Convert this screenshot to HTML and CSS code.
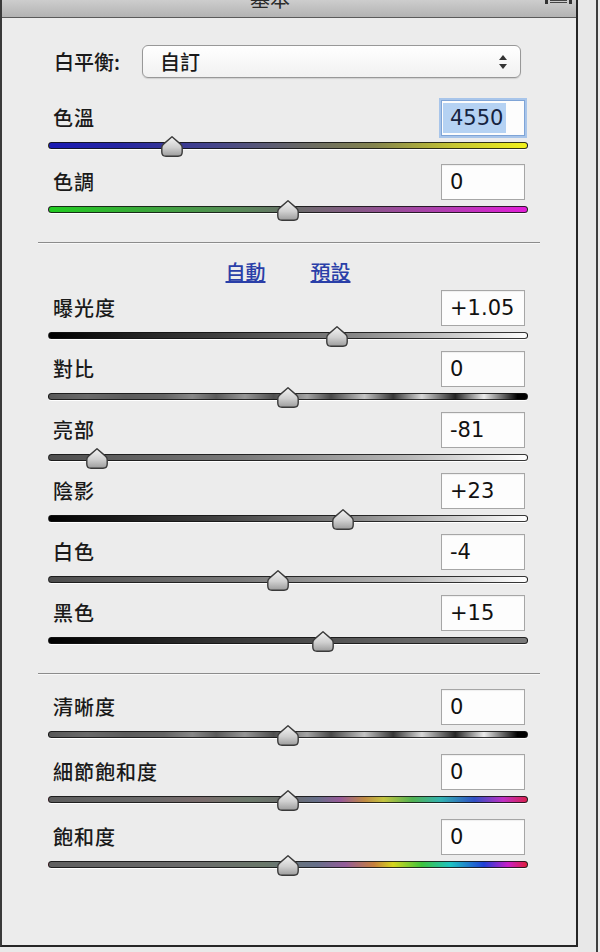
FILE: index.html
```html
<!DOCTYPE html>
<html lang="zh-Hant">
<head>
<meta charset="utf-8">
<title>基本</title>
<link rel="stylesheet" href="styles.css">
</head>
<body>
<div class="frame">
  <div class="panel">
    <div class="header">
      <span class="title">基本</span>
      <svg class="menu-icon" width="27" height="4" viewBox="0 0 27 4">
        <rect x="0" y="0" width="3" height="4" fill="#333"/>
        <rect x="5" y="0" width="17" height="1" fill="#444"/>
        <rect x="5" y="2" width="17" height="1" fill="#444"/>
        <rect x="24" y="0" width="3" height="4" fill="#333"/>
      </svg>
    </div>
    <div class="content">
      <div class="wb-row">
        <span class="label wb-label">白平衡:</span>
        <div class="select">
          <span>自訂</span>
          <svg class="updown" width="8" height="14" viewBox="0 0 8 14">
            <polygon points="4,0 8,5 0,5" fill="#333"/>
            <polygon points="0,9 8,9 4,14" fill="#333"/>
          </svg>
        </div>
      </div>

      <div class="group g1">
        <div class="ctrl">
          <div class="ctrl-head"><span class="label">色溫</span><div class="value focus"><span class="sel">4550</span></div></div>
          <div class="slider"><div class="track t-temp"></div><svg class="thumb" style="left:25.9%" viewBox="0 0 22 21"><use href="#thumb"/></svg></div>
        </div>
        <div class="ctrl">
          <div class="ctrl-head"><span class="label">色調</span><div class="value">0</div></div>
          <div class="slider"><div class="track t-tint"></div><svg class="thumb" style="left:50.1%" viewBox="0 0 22 21"><use href="#thumb"/></svg></div>
        </div>
      </div>

      <div class="divider"></div>

      <div class="links"><a href="#">自動</a><a href="#">預設</a></div>

      <div class="group g2">
        <div class="ctrl">
          <div class="ctrl-head"><span class="label">曝光度</span><div class="value">+1.05</div></div>
          <div class="slider"><div class="track t-bw"></div><svg class="thumb" style="left:60.3%" viewBox="0 0 22 21"><use href="#thumb"/></svg></div>
        </div>
        <div class="ctrl">
          <div class="ctrl-head"><span class="label">對比</span><div class="value">0</div></div>
          <div class="slider"><div class="track t-contrast"></div><svg class="thumb" style="left:50.1%" viewBox="0 0 22 21"><use href="#thumb"/></svg></div>
        </div>
        <div class="ctrl">
          <div class="ctrl-head"><span class="label">亮部</span><div class="value">-81</div></div>
          <div class="slider"><div class="track t-gw"></div><svg class="thumb" style="left:10.3%" viewBox="0 0 22 21"><use href="#thumb"/></svg></div>
        </div>
        <div class="ctrl">
          <div class="ctrl-head"><span class="label">陰影</span><div class="value">+23</div></div>
          <div class="slider"><div class="track t-bw"></div><svg class="thumb" style="left:61.5%" viewBox="0 0 22 21"><use href="#thumb"/></svg></div>
        </div>
        <div class="ctrl">
          <div class="ctrl-head"><span class="label">白色</span><div class="value">-4</div></div>
          <div class="slider"><div class="track t-gw"></div><svg class="thumb" style="left:47.9%" viewBox="0 0 22 21"><use href="#thumb"/></svg></div>
        </div>
        <div class="ctrl">
          <div class="ctrl-head"><span class="label">黑色</span><div class="value">+15</div></div>
          <div class="slider"><div class="track t-bg"></div><svg class="thumb" style="left:57.3%" viewBox="0 0 22 21"><use href="#thumb"/></svg></div>
        </div>
      </div>

      <div class="divider"></div>

      <div class="group g3">
        <div class="ctrl">
          <div class="ctrl-head"><span class="label">清晰度</span><div class="value">0</div></div>
          <div class="slider"><div class="track t-contrast"></div><svg class="thumb" style="left:50.1%" viewBox="0 0 22 21"><use href="#thumb"/></svg></div>
        </div>
        <div class="ctrl">
          <div class="ctrl-head"><span class="label">細節飽和度</span><div class="value">0</div></div>
          <div class="slider"><div class="track t-vib"></div><svg class="thumb" style="left:50.1%" viewBox="0 0 22 21"><use href="#thumb"/></svg></div>
        </div>
        <div class="ctrl">
          <div class="ctrl-head"><span class="label">飽和度</span><div class="value">0</div></div>
          <div class="slider"><div class="track t-sat"></div><svg class="thumb" style="left:50.1%" viewBox="0 0 22 21"><use href="#thumb"/></svg></div>
        </div>
      </div>
    </div>
  </div>
  <div class="side"></div>
</div>

<svg class="defs" width="0" height="0">
  <defs>
    <linearGradient id="thumbGrad" x1="0" y1="0" x2="0" y2="1">
      <stop offset="0" stop-color="#f4f4f4"/>
      <stop offset="0.55" stop-color="#cfcfcf"/>
      <stop offset="1" stop-color="#9c9c9c"/>
    </linearGradient>
    <g id="thumb">
      <path d="M11 0.8 L19.8 8.4 Q21.2 9.8 21.2 11.8 V16 Q21.2 20.2 17 20.2 H5 Q0.8 20.2 0.8 16 V11.8 Q0.8 9.8 2.2 8.4 Z" fill="url(#thumbGrad)" stroke="#3a3a3a" stroke-width="1.4" stroke-linejoin="round"/>
    </g>
  </defs>
</svg>
</body>
</html>
```

FILE: styles.css
```css
html, body {
  margin: 0;
  padding: 0;
}

body {
  background: #e9e9e9;
  font-family: "Noto Sans CJK TC", "Noto Sans", sans-serif;
  width: 600px;
  height: 952px;
  overflow: hidden;
}

.frame {
  display: flex;
  width: 600px;
  height: 952px;
}

.panel {
  width: 578px;
  height: 947px;
  box-sizing: border-box;
  border-left: 2px solid #3a3a3a;
  border-right: 2px solid #262626;
  border-bottom: 2px solid #262626;
  background: #ececec;
  display: flex;
  flex-direction: column;
}

.side {
  width: 18px;
  height: 952px;
  border-right: 2px solid #3e3e3e;
  background: #e8e8e8;
}

.header {
  height: 18px;
  box-sizing: border-box;
  border-bottom: 1px solid #5a5a5a;
  background: linear-gradient(#cdcdcd, #b3b3b3);
  display: flex;
  align-items: flex-start;
  overflow: hidden;
}

.title {
  margin-left: 248px;
  margin-top: -11px;
  font-size: 20px;
  line-height: 20px;
  color: #2a2a2a;
}

.menu-icon {
  margin-left: auto;
  margin-right: 4px;
  display: block;
}

.content {
  width: 480px;
  padding: 27px 0 0 46px;
}

.label {
  font-size: 20px;
  font-weight: 500;
  letter-spacing: 1px;
  color: #1a1a1a;
  line-height: 24px;
}

.wb-row {
  display: flex;
  align-items: center;
  height: 33px;
}

.wb-label {
  width: 88px;
  margin-left: 6px;
  letter-spacing: 0;
}

.select {
  width: 379px;
  height: 33px;
  box-sizing: border-box;
  border: 1px solid #989898;
  border-radius: 6px;
  background: linear-gradient(#ffffff, #f1f1f1);
  box-shadow: 0 1px 1px rgba(0, 0, 0, 0.12);
  display: flex;
  align-items: center;
  padding-left: 17px;
  padding-right: 13px;
  font-size: 20px;
  font-weight: 500;
  color: #1a1a1a;
}

.select span {
  flex: 1;
}

.updown {
  display: block;
}

.group {
  display: flex;
  flex-direction: column;
}

.g1 { margin-top: 22px; gap: 8px; }
.g2 { margin-top: 6px; gap: 5px; }
.g3 { margin-top: 14px; gap: 9px; }

.ctrl-head {
  height: 36px;
  display: flex;
  align-items: center;
  justify-content: space-between;
  padding-left: 5px;
  padding-right: 3px;
}

.value {
  width: 84px;
  height: 36px;
  box-sizing: border-box;
  border: 1px solid #a6a6a6;
  background: #fdfdfd;
  box-shadow: inset 0 1px 1px rgba(0, 0, 0, 0.06);
  display: flex;
  align-items: center;
  padding-left: 8px;
  font-family: "DejaVu Sans", sans-serif;
  font-size: 21px;
  color: #111;
}

.value.focus {
  border-color: #7fa4d6;
  box-shadow: 0 0 0 2px #a8c5ea;
  padding-left: 1px;
  align-items: stretch;
}

.sel {
  display: flex;
  align-items: center;
  padding: 0 3px 0 7px;
  margin: 2px 0;
  background: #b5d2f3;
  color: #15233f;
}

.slider {
  position: relative;
  height: 20px;
  box-sizing: border-box;
  padding-top: 6px;
}

.track {
  height: 7px;
  box-sizing: border-box;
  border: 1px solid rgba(20, 20, 20, 0.85);
  border-radius: 4px;
  box-shadow: 0 1px 0 #ffffff;
}

.thumb {
  position: absolute;
  top: 0;
  width: 22px;
  height: 21px;
  margin-left: -11px;
}

.t-temp {
  background: linear-gradient(90deg, #1c1cb4 0%, #2626a2 15%, #46468a 35%, #676767 52%, #84844e 68%, #c6c632 85%, #f2f21c 100%);
}

.t-tint {
  background: linear-gradient(90deg, #22cc22 0%, #3aa83a 20%, #588a58 40%, #6c6c6c 52%, #885888 65%, #b03fb0 82%, #e21ed8 100%);
}

.t-bw {
  background: linear-gradient(90deg, #000 0%, #404040 35%, #8a8a8a 65%, #fff 100%);
}

.t-gw {
  background: linear-gradient(90deg, #4e4e4e 0%, #7a7a7a 40%, #b8b8b8 75%, #fff 100%);
}

.t-bg {
  background: linear-gradient(90deg, #000 0%, #3a3a3a 40%, #666 75%, #7a7a7a 100%);
}

.t-contrast {
  background: linear-gradient(90deg, #585858 0%, #6a6a6a 8%, #5c5c5c 16%, #646464 24%, #888 30%, #5a5a5a 35%, #969696 41%, #4e4e4e 47%, #a4a4a4 54%, #484848 59%, #c4c4c4 66%, #363636 72%, #d8d8d8 78%, #242424 85%, #ececec 91%, #000 98%);
}

.t-vib {
  background: linear-gradient(90deg, #5e5e5e 0%, #6a6a6a 20%, #7a6c6c 32%, #6c7a6c 42%, #6c6c6c 50%, #66708a 56%, #985a98 61%, #c08a44 66%, #c4c440 70%, #52b252 76%, #32b2b2 82%, #3050c4 89%, #c030c4 95%, #d82050 100%);
}

.t-sat {
  background: linear-gradient(90deg, #606060 0%, #6c6c6c 30%, #6a786a 45%, #66708a 56%, #945c9a 62%, #c8803c 68%, #d6d61e 72%, #3ec43e 78%, #1ec4c4 84%, #2040d6 91%, #c81ec8 96%, #e01e3c 100%);
}

.divider {
  margin-top: 22px;
  margin-left: -10px;
  width: 502px;
  height: 2px;
  box-sizing: border-box;
  border-top: 1px solid #8c8c8c;
  border-bottom: 1px solid #f8f8f8;
}

.links {
  margin-top: 16px;
  height: 24px;
  display: flex;
  justify-content: center;
  gap: 45px;
}

.links a {
  font-size: 20px;
  font-weight: 500;
  line-height: 24px;
  color: #2a3fa8;
  text-decoration: underline;
}

.defs {
  position: absolute;
  width: 0;
  height: 0;
}
```
